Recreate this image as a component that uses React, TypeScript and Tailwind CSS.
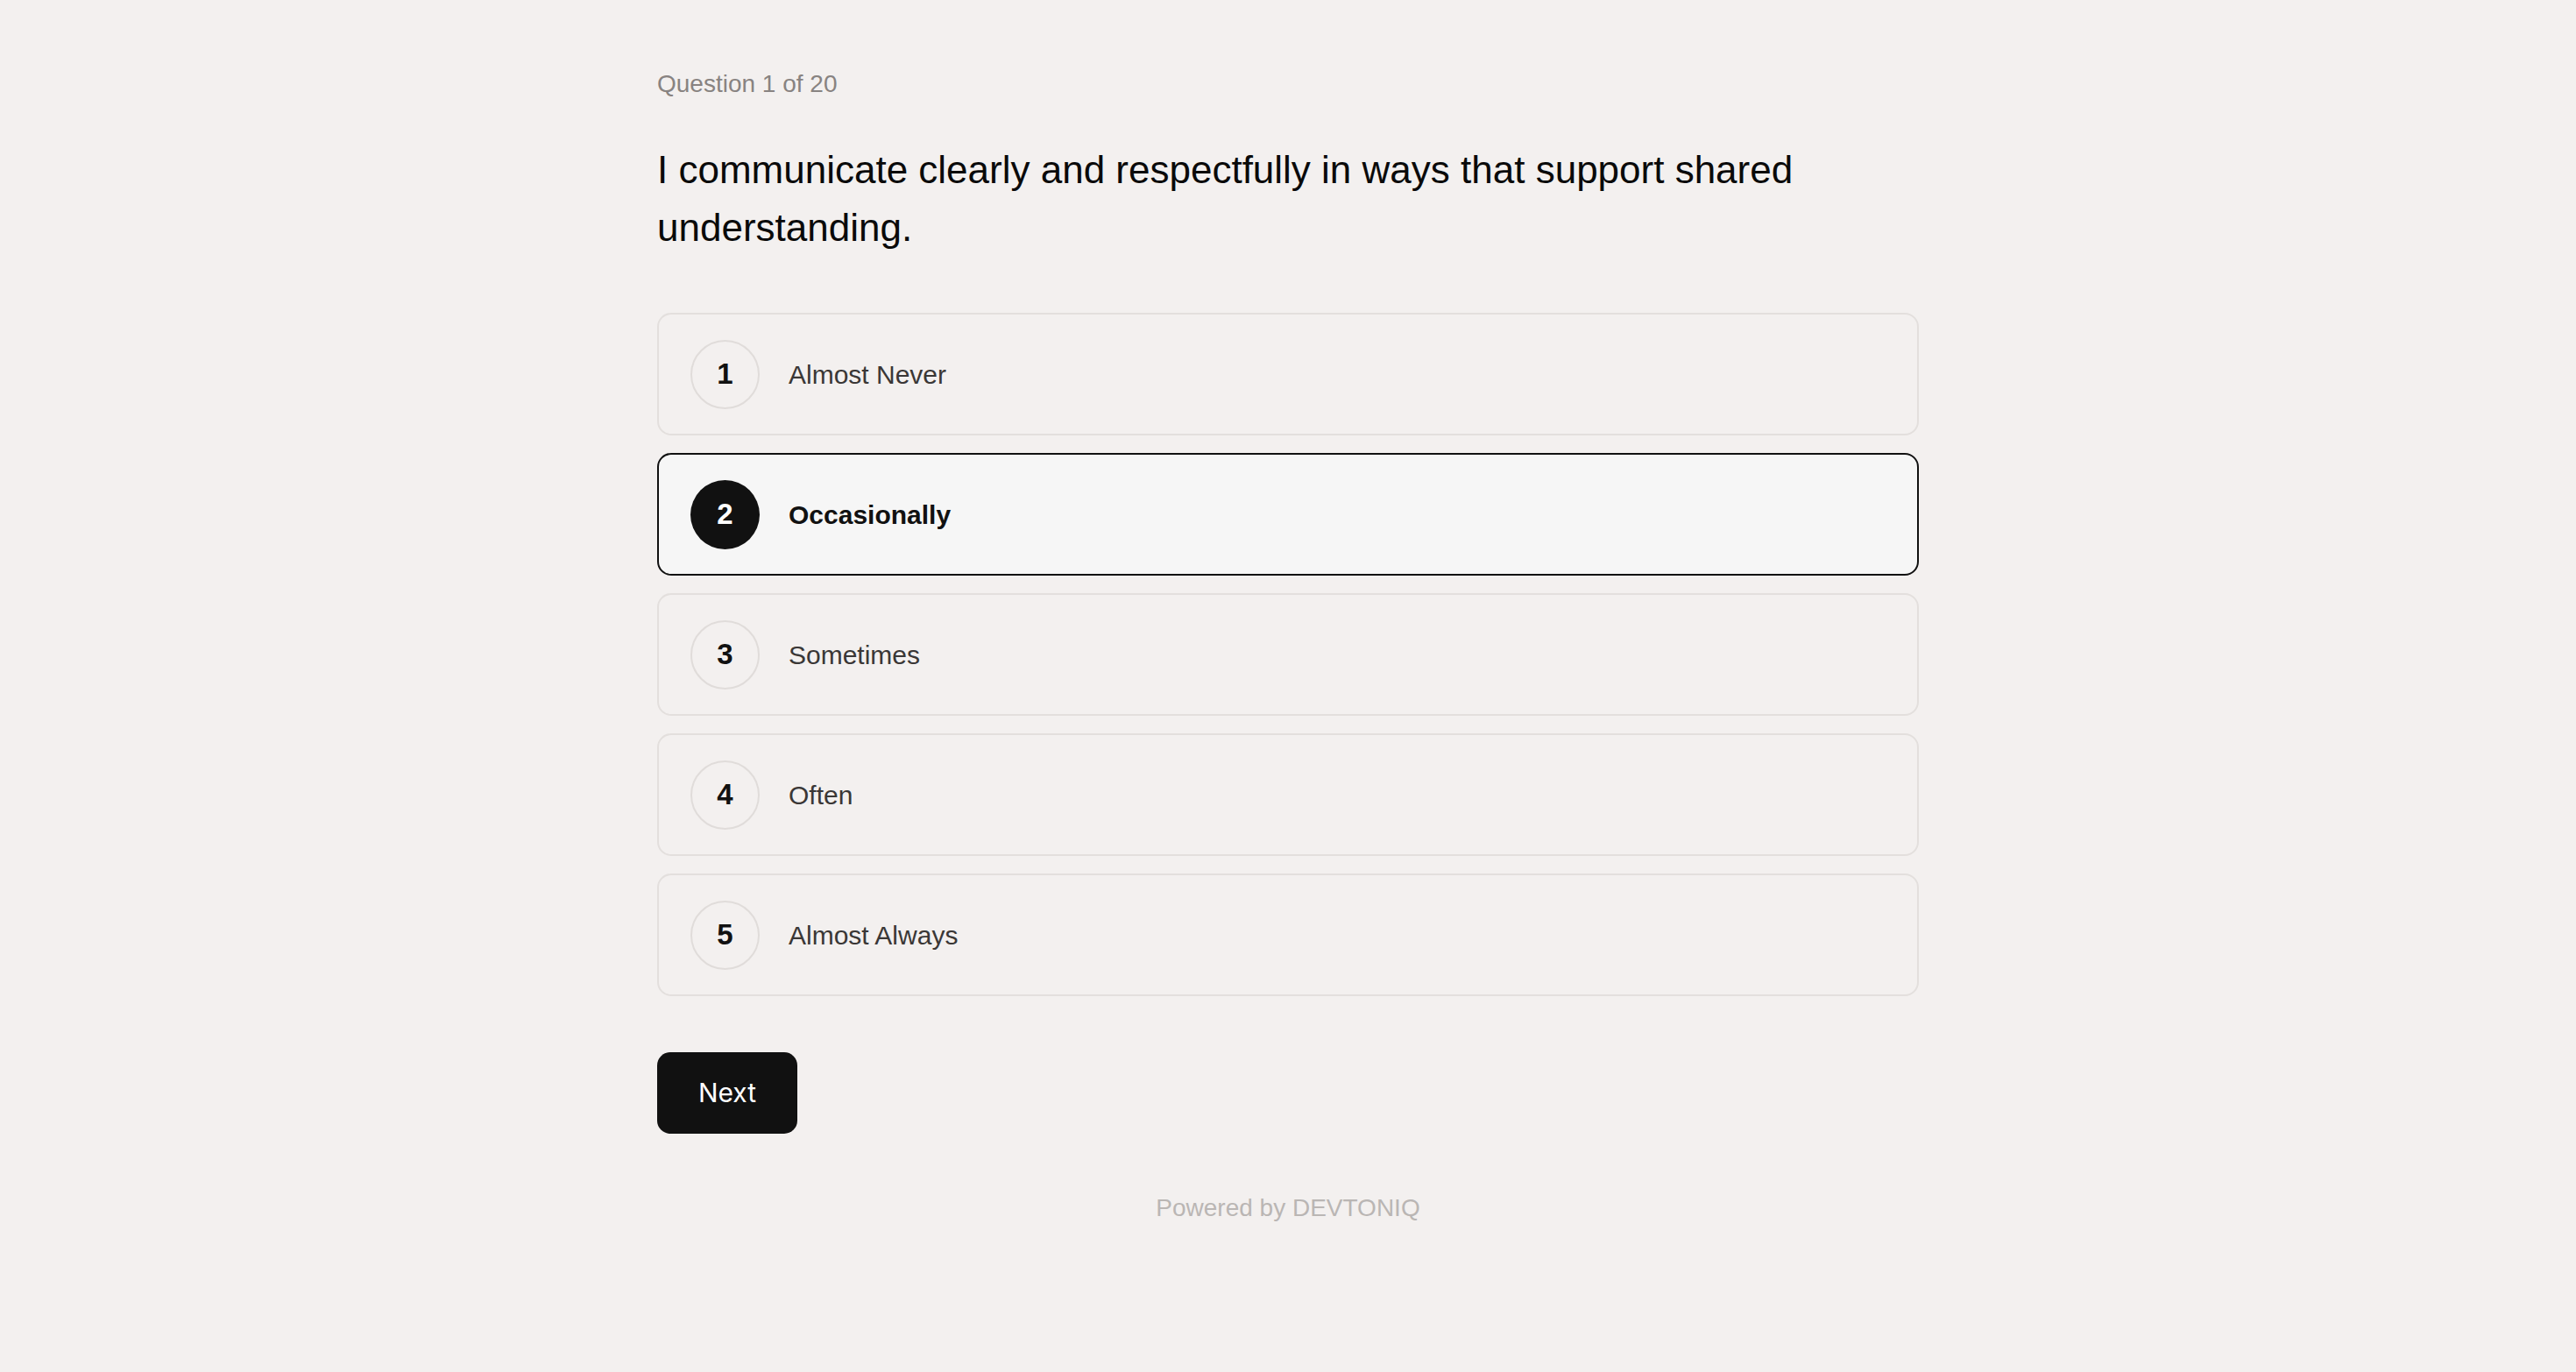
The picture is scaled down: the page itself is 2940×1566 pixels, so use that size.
import { useState } from "react";

const options = [
  { value: 1, label: "Almost Never" },
  { value: 2, label: "Occasionally" },
  { value: 3, label: "Sometimes" },
  { value: 4, label: "Often" },
  { value: 5, label: "Almost Always" },
];

interface OptionRowProps {
  value: number;
  label: string;
  selected: boolean;
  onSelect: () => void;
}

const OptionRow = ({ value, label, selected, onSelect }: OptionRowProps) => {
  return (
    <button
      onClick={onSelect}
      className={
        selected
          ? "w-full h-[140px] flex items-center gap-[33px] px-[36px] rounded-[16px] border-[2.5px] border-[#111111] bg-[#f6f6f6] text-left"
          : "w-full h-[140px] flex items-center gap-[33px] px-[36px] rounded-[16px] border-2 border-[#e3dfdd] bg-[#f3f0ef] text-left"
      }
    >
      <span
        className={
          selected
            ? "w-[79px] h-[79px] shrink-0 rounded-full bg-[#111111] text-white flex items-center justify-center text-[33px] font-bold"
            : "w-[79px] h-[79px] shrink-0 rounded-full border-2 border-[#e0dcda] text-[#111111] flex items-center justify-center text-[33px] font-bold"
        }
      >
        {value}
      </span>
      <span
        className={
          selected
            ? "text-[30px] font-bold text-[#111111]"
            : "text-[30px] text-[#3a3736]"
        }
      >
        {label}
      </span>
    </button>
  );
};

export default function App() {
  const [answer, setAnswer] = useState(2);

  return (
    <div className="min-h-screen bg-[#f3f0ef] font-['Liberation_Sans',Arial,sans-serif]">
      <div className="max-w-[1440px] mx-auto pt-[75px] pb-[120px]">
        <p className="text-[28px] leading-[42px] text-[#888381]">Question 1 of 20</p>
        <h1 className="mt-[44px] text-[44px] leading-[66px] text-[#0a0a0a]">
          I communicate clearly and respectfully in ways that support shared understanding.
        </h1>

        <div className="mt-[64px] flex flex-col gap-[20px]">
          {options.map((o) => (
            <OptionRow
              key={o.value}
              value={o.value}
              label={o.label}
              selected={answer === o.value}
              onSelect={() => setAnswer(o.value)}
            />
          ))}
        </div>

        <button className="mt-[64px] w-[160px] h-[93px] rounded-[15px] bg-[#111111] text-white text-[30px] font-normal font-['Inter',sans-serif]">
          Next
        </button>

        <p className="mt-[64px] text-center text-[28px] leading-[42px] text-[#bab6b4]">
          Powered by DEVTONIQ
        </p>
      </div>
    </div>
  );
}
